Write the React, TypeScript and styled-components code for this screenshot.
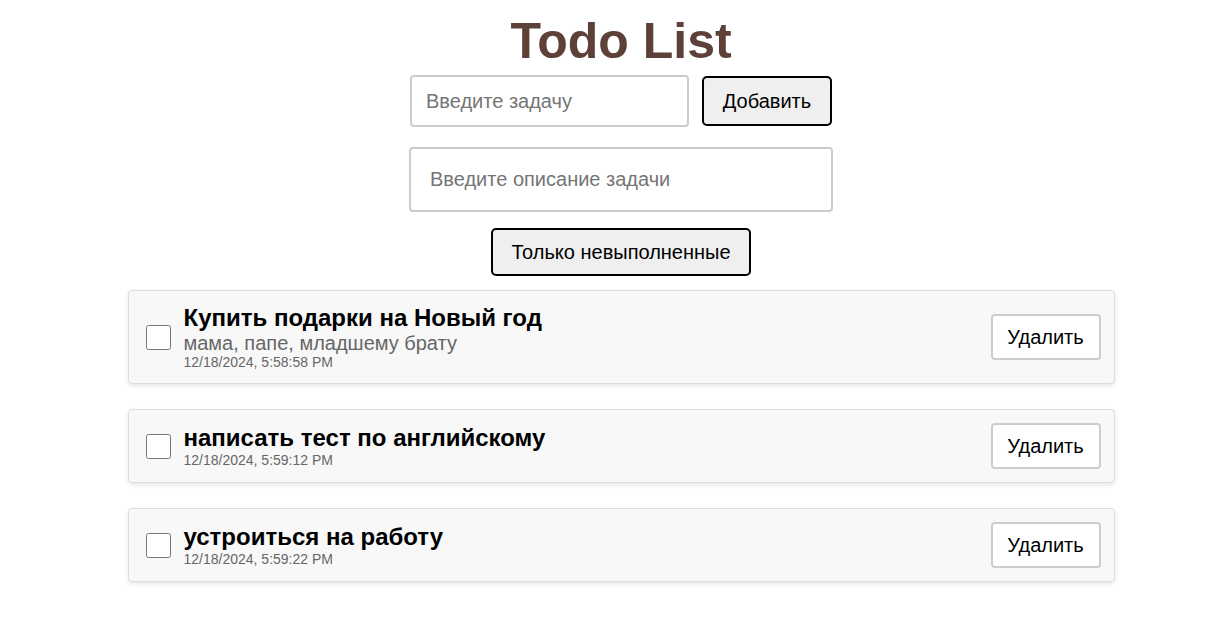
import React from "react";
import styled, { createGlobalStyle } from "styled-components";

const GlobalStyle = createGlobalStyle`
  html, body { margin: 0; padding: 0; background: #ffffff; }
  body { font-family: "Liberation Sans", Arial, sans-serif; }
`;

const Page = styled.div`
  display: flex;
  flex-direction: column;
  align-items: center;
  padding: 12px 0 40px 12px;
`;

const Title = styled.h1`
  margin: 0;
  font-size: 50px;
  font-weight: 700;
  color: #5d4037;
  line-height: normal;
`;

const AddRow = styled.div`
  display: flex;
  align-items: center;
  gap: 13px;
  margin-top: 5px;
`;

const TextInput = styled.input<{ $w: number; $h: number; $pad: number }>`
  box-sizing: border-box;
  width: ${(p) => p.$w}px;
  height: ${(p) => p.$h}px;
  padding: 0 ${(p) => p.$pad}px;
  border: 2px solid #cccccc;
  border-radius: 4px;
  font-family: "Liberation Sans", Arial, sans-serif;
  font-size: 20px;
  color: #000;
  outline: none;
  &::placeholder { color: #757575; }
`;

const DescInput = styled(TextInput)`
  margin-top: 20px;
`;

const DarkButton = styled.button<{ $w: number; $h: number }>`
  box-sizing: border-box;
  width: ${(p) => p.$w}px;
  height: ${(p) => p.$h}px;
  border: 2px solid #000;
  border-radius: 5px;
  background: #efefef;
  color: #000;
  font-family: "Liberation Sans", Arial, sans-serif;
  font-size: 20px;
  padding: 0;
  cursor: pointer;
`;

const FilterButton = styled(DarkButton)`
  margin-top: 16px;
`;

const List = styled.div`
  display: flex;
  flex-direction: column;
  gap: 25px;
  margin-top: 14px;
  width: 987px;
`;

const Card = styled.div`
  box-sizing: border-box;
  display: flex;
  align-items: center;
  gap: 13px;
  padding: 13px 13px 13px 17px;
  background: #f8f8f8;
  border: 1px solid #dddddd;
  border-radius: 4px;
  box-shadow: 0 2px 4px rgba(0, 0, 0, 0.1);
`;

const Check = styled.input`
  width: 25px;
  height: 25px;
  margin: 0;
  flex: none;
`;

const Body = styled.div`
  flex: 1;
  display: flex;
  flex-direction: column;
`;

const TaskTitle = styled.div`
  font-size: 24px;
  font-weight: 700;
  color: #000;
`;

const TaskDesc = styled.div`
  font-size: 20px;
  line-height: 22px;
  color: #666666;
`;

const TaskDate = styled.div`
  font-size: 14px;
  color: #666666;
`;

const DeleteButton = styled.button`
  box-sizing: border-box;
  width: 110px;
  height: 46px;
  border: 2px solid #cccccc;
  border-radius: 4px;
  background: #ffffff;
  color: #000;
  font-family: "Liberation Sans", Arial, sans-serif;
  font-size: 20px;
  padding: 0;
  flex: none;
  cursor: pointer;
`;

type Task = { title: string; desc?: string; date: string };

const tasks: Task[] = [
  { title: "Купить подарки на Новый год", desc: "мама, папе, младшему брату", date: "12/18/2024, 5:58:58 PM" },
  { title: "написать тест по английскому", date: "12/18/2024, 5:59:12 PM" },
  { title: "устроиться на работу", date: "12/18/2024, 5:59:22 PM" },
];

export default function App() {
  return (
    <>
      <GlobalStyle />
      <Page>
        <Title>Todo List</Title>
        <AddRow>
          <TextInput $w={279} $h={52} $pad={14} placeholder="Введите задачу" />
          <DarkButton $w={130} $h={50}>Добавить</DarkButton>
        </AddRow>
        <DescInput $w={424} $h={65} $pad={19} placeholder="Введите описание задачи" />
        <FilterButton $w={260} $h={48}>Только невыполненные</FilterButton>
        <List>
          {tasks.map((t) => (
            <Card key={t.date}>
              <Check type="checkbox" />
              <Body>
                <TaskTitle>{t.title}</TaskTitle>
                {t.desc && <TaskDesc>{t.desc}</TaskDesc>}
                <TaskDate>{t.date}</TaskDate>
              </Body>
              <DeleteButton>Удалить</DeleteButton>
            </Card>
          ))}
        </List>
      </Page>
    </>
  );
}
